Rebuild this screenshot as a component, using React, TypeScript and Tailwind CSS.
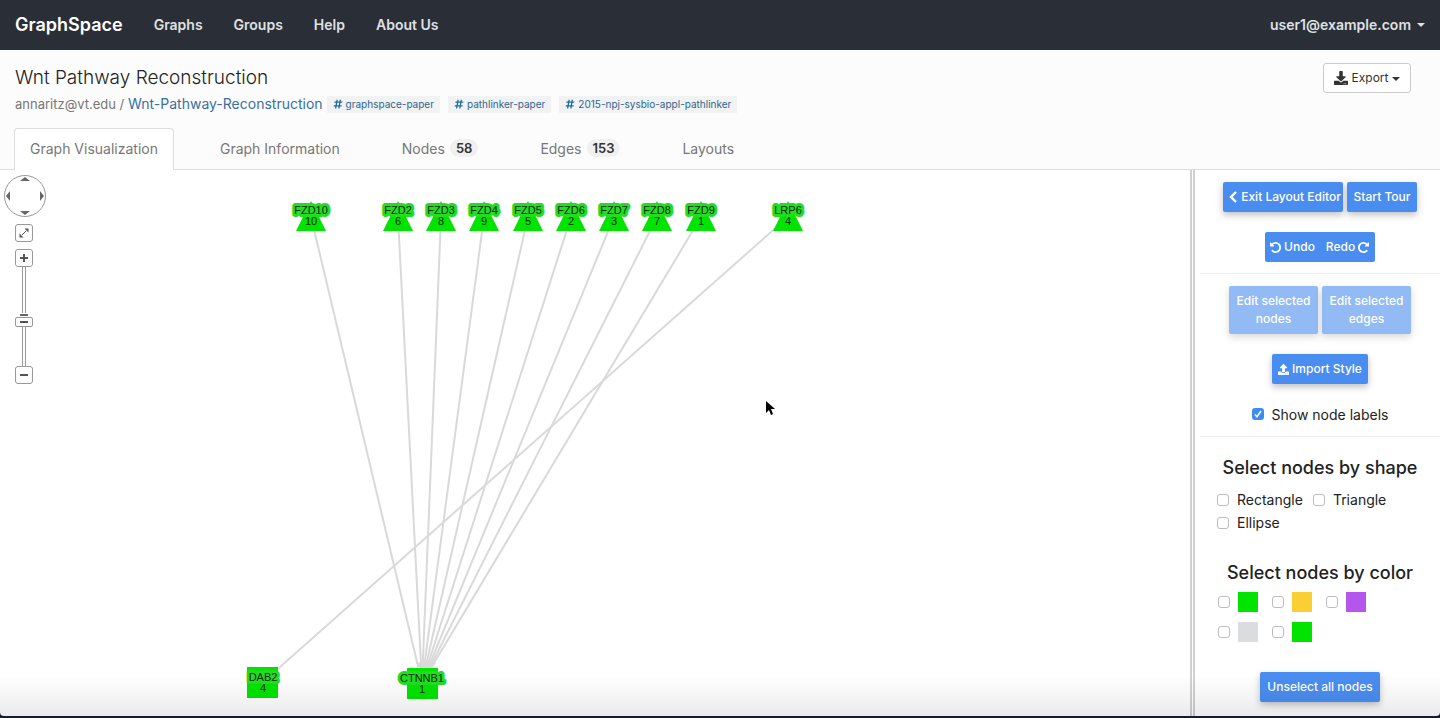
import type { ReactNode } from "react";
import { FaDownload, FaHashtag, FaUpload } from "react-icons/fa";

const receptors = [
  { x: 311, name: "FZD10", rank: "10" },
  { x: 398, name: "FZD2", rank: "6" },
  { x: 441, name: "FZD3", rank: "8" },
  { x: 484, name: "FZD4", rank: "9" },
  { x: 528, name: "FZD5", rank: "5" },
  { x: 571, name: "FZD6", rank: "2" },
  { x: 614, name: "FZD7", rank: "3" },
  { x: 657, name: "FZD8", rank: "7" },
  { x: 701, name: "FZD9", rank: "1" },
];

function Caret() {
  return <span className="mt-px inline-block border-x-4 border-t-4 border-x-transparent border-t-current" />;
}

function Rotate({ className = "" }: { className?: string }) {
  return (
    <svg viewBox="0 128 1536 1536" className={`h-[11px] w-[11px] ${className}`} fill="currentColor" aria-hidden="true">
      <path d="M1536 896q0 156-61 298t-164 245-245 164-298 61q-172 0-327-72.500T177 1387q-7-10-6.500-22.500t8.500-20.500l137-138q10-9 25-9 16 2 23 12 73 95 179 147t225 52q104 0 198.500-40.500t163.500-109.500 109.500-163.500T1280 896t-40.500-198.500T1130 534 966.500 424.500 768 384q-98 0-188 35.500T420 521l137 138q31 30 14 69-17 40-59 40H64q-26 0-45-19T0 704V256q0-42 40-59 39-17 69 14l130 129q107-101 244.500-156.500T768 128q156 0 298 61t245 164 164 245 61 298z" />
    </svg>
  );
}

function Label({ x, y, name, rank }: { x: number; y: number; name: string; rank: string }) {
  return (
    <g textAnchor="middle" fontSize="11" fill="#062806" stroke="#22dd22" strokeWidth="6" strokeLinejoin="round" paintOrder="stroke">
      <text x={x} y={y}>{name}</text>
      <text x={x} y={y + 11} stroke="none">{rank}</text>
    </g>
  );
}

function Receptor({ x, name, rank }: { x: number; name: string; rank: string }) {
  return (
    <g>
      <path d={`M${x} 31L${x + 15} 61H${x - 15}Z`} fill="#00e400" />
      <Label x={x} y={44} name={name} rank={rank} />
    </g>
  );
}

function Graph() {
  return (
    <svg className="absolute inset-0 h-full w-full font-['Liberation_Sans',Arial,sans-serif]" role="img" aria-label="Wnt pathway graph">
      <g stroke="#d9d9d9" strokeWidth="2">
        {receptors.map((r) => {
          const k = (497 - 47) / (513 - 47);
          return <line key={r.name} x1={r.x} y1={47} x2={r.x + (422 - r.x) * k} y2={497} />;
        })}
        <line x1="788" y1="47" x2="263" y2="512" />
      </g>
      <path d="M416 493l5-1h11l4 1-4 5h-12z" fill="#d9d9d9" />
      {receptors.map((r) => (
        <Receptor key={r.name} {...r} />
      ))}
      <Receptor x={788} name="LRP6" rank="4" />
      <rect x="247" y="497" width="31" height="31" fill="#00e400" />
      <Label x={263} y={511} name="DAB2" rank="4" />
      <rect x="407" y="498" width="31" height="31" fill="#00e400" />
      <Label x={422} y={512} name="CTNNB1" rank="1" />
      <path d="M766 231v12l3-3 2 5 2-1-2-5h4z" fill="#000" stroke="#fff" strokeWidth="1" paintOrder="stroke" />
    </svg>
  );
}

const zoomButton =
  "flex h-[18px] w-[18px] items-center justify-center rounded-[3px] border border-[#999] bg-white text-[#555]";

function PanZoom() {
  return (
    <div className="absolute left-1 top-[5px] flex w-[42px] flex-col items-center">
      <button aria-label="Pan" className="h-[42px] w-[42px] rounded-full border border-[#999] bg-white">
        <svg viewBox="0 0 40 40" className="h-10 w-10" fill="#666">
          <path d="M20 1l5 4h-10zM20 39l5-4h-10zM1 20l4-5v10zM39 20l-4-5v10z" />
        </svg>
      </button>
      <div className="flex flex-col items-center pr-[2px] pt-[7px]">
        <button aria-label="Fit" className={zoomButton}>
          <svg viewBox="0 0 12 12" className="h-3 w-3" fill="currentColor" stroke="currentColor">
            <path d="M4 8l4-4" />
            <path d="M6.500 1.500H10.500V5.500zM1.500 6.500V10.500H5.500z" stroke="none" />
          </svg>
        </button>
        <button aria-label="Zoom in" className={`${zoomButton} mt-[7px]`}>
          <svg viewBox="0 0 10 10" className="h-[10px] w-[10px]" stroke="currentColor" strokeWidth="2">
            <path d="M1 5h8M5 1v8" />
          </svg>
        </button>
        <div className="relative flex h-[99px] w-[18px] justify-center">
          <div className="w-1 border-x border-[#999] bg-white" />
          <div className="absolute inset-x-0 top-[47px] flex flex-col items-center">
            <div className="h-[2px] w-2 bg-[#666] outline outline-white" />
            <div className="mt-px flex h-[10px] w-[18px] items-center justify-center rounded-[2px] border border-[#999] bg-white">
              <div className="h-[2px] w-2 bg-[#555]" />
            </div>
          </div>
          <input type="range" aria-label="Zoom level" className="absolute inset-0 h-full w-full opacity-0 [writing-mode:vertical-lr]" />
        </div>
        <button aria-label="Zoom out" className={zoomButton}>
          <svg viewBox="0 0 10 10" className="h-[10px] w-[10px]" stroke="currentColor" strokeWidth="2">
            <path d="M1 5h8" />
          </svg>
        </button>
      </div>
    </div>
  );
}

function Tag({ children }: { children: ReactNode }) {
  return (
    <a href="#tag" className="flex h-[17px] items-center gap-[3px] bg-[#f1f2f2] px-[6px] text-[10px] text-[#2f6690]">
      <FaHashtag className="h-[10px] w-[10px] text-[#1b6a9c]" />
      {children}
    </a>
  );
}

function Badge({ children }: { children: ReactNode }) {
  return <span className="rounded-full bg-[#f0f0f0] px-[6px] text-[13px] leading-[18px] font-semibold text-[#333]">{children}</span>;
}

function Tab({ children }: { children: ReactNode }) {
  return (
    <button role="tab" className="flex items-center gap-[5px] px-4 pb-[2px]">
      {children}
    </button>
  );
}

const blue = "flex items-center justify-center bg-[#4a8df0] text-[12px] leading-[18px] font-medium text-white";
const raised = "rounded-[2px] shadow-[0_3px_7px_rgba(0,0,0,0.25)]";
const box =
  "h-3 w-3 shrink-0 appearance-none rounded-[3px] border border-[#bdbdbd] bg-white";

function Shape({ id, children }: { id: string; children: string }) {
  return (
    <div className="flex items-center gap-2">
      <input id={id} type="checkbox" className={box} />
      <label htmlFor={id}>{children}</label>
    </div>
  );
}

function Swatch({ name, color }: { name: string; color: string }) {
  return (
    <label className="flex items-center gap-2">
      <input type="checkbox" aria-label={name} className={box} />
      <span className={`h-5 w-5 ${color}`} />
    </label>
  );
}

function Sidebar() {
  return (
    <aside className="w-[250px] shrink-0 border-l-[5px] border-double border-[#d0d0d0] pl-[5px] text-[14px] text-[#222]">
      <div className="flex flex-col items-center border-b border-[#eee] pb-[11px] pt-3">
        <div className="flex gap-1">
          <button className={`${blue} ${raised} h-[30px] w-[120px] gap-1 pl-1`}>
            <svg viewBox="0 0 8 12" className="h-3 w-2" fill="none" stroke="currentColor" strokeWidth="2.400" aria-hidden="true">
              <path d="M7 1L2 6l5 5" />
            </svg>
            <span className="whitespace-nowrap">Exit Layout Editor</span>
          </button>
          <button className={`${blue} ${raised} h-[30px] w-[70px]`}>Start Tour</button>
        </div>
        <div className="mt-5 flex overflow-hidden rounded-[2px]">
          <button className={`${blue} h-[30px] w-[55px] gap-[3px]`}>
            <Rotate />
            Undo
          </button>
          <button className={`${blue} h-[30px] w-[55px] gap-[3px]`}>
            Redo
            <Rotate className="-scale-x-100" />
          </button>
        </div>
      </div>
      <div className="flex flex-col items-center border-b border-[#eee] pb-3 pt-3">
        <div className="flex gap-1">
          <button disabled className={`${blue} ${raised} h-12 w-[89px] px-1 opacity-60`}>Edit selected nodes</button>
          <button disabled className={`${blue} ${raised} h-12 w-[89px] px-1 opacity-60`}>Edit selected edges</button>
        </div>
        <button className={`${blue} ${raised} mt-5 h-[30px] w-24 gap-[3px]`}>
          <FaUpload className="h-[11px] w-[11px]" />
          Import Style
        </button>
        <div className="mt-5 flex h-5 items-center gap-2">
          <span className="relative flex">
            <input id="labels" type="checkbox" defaultChecked className="h-3 w-3 appearance-none rounded-[3px] bg-[#3f8cf0]" />
            <svg viewBox="0 0 12 12" className="pointer-events-none absolute inset-0 h-3 w-3" fill="none" stroke="#fff" strokeWidth="1.500">
              <path d="M3 6.500l2 2.300L9 3" />
            </svg>
          </span>
          <label htmlFor="labels">Show node labels</label>
        </div>
      </div>
      <h2 className="pt-[19px] text-center text-[18px] leading-6 font-medium">Select nodes by shape</h2>
      <div className="flex flex-wrap gap-x-[10px] pl-[17px] pt-2 leading-[23px]">
        <Shape id="rectangle">Rectangle</Shape>
        <Shape id="triangle">Triangle</Shape>
        <Shape id="ellipse">Ellipse</Shape>
      </div>
      <h2 className="pt-[27px] text-center text-[18px] leading-6 font-medium">Select nodes by color</h2>
      <div className="grid w-fit grid-cols-3 gap-x-[14px] gap-y-[10px] pl-[18px] pt-[7px]">
        <Swatch name="Green" color="bg-[#00e400]" />
        <Swatch name="Yellow" color="bg-[#f9cf33]" />
        <Swatch name="Purple" color="bg-[#b455ee]" />
        <Swatch name="Gray" color="bg-[#dadcdd]" />
        <Swatch name="Lime" color="bg-[#00e400]" />
      </div>
      <div className="flex justify-center pb-[14px] pt-[30px]">
        <button className={`${blue} ${raised} h-[30px] w-[120px]`}>Unselect all nodes</button>
      </div>
    </aside>
  );
}

export default function App() {
  return (
    <div className="flex min-h-screen flex-col bg-[#141e2e] pb-[2px] font-['Inter',sans-serif]">
      <header className="flex h-[50px] items-center justify-between bg-[#2a2e37] px-[15px] pb-[2px] text-[14px] font-semibold text-[#dfe1e4]">
        <nav className="flex items-center gap-[31px]">
          <a href="#home" className="text-[18px] text-white">GraphSpace</a>
          <a href="#graphs">Graphs</a>
          <a href="#groups">Groups</a>
          <a href="#help">Help</a>
          <a href="#about">About Us</a>
        </nav>
        <button className="flex items-center gap-[6px]">
          user1@example.com
          <Caret />
        </button>
      </header>
      <div className="border-b border-[#ddd] bg-[#fcfcfc]">
        <div className="flex justify-between pl-[15px] pr-[29px] pt-[13px]">
          <div>
            <h1 className="pt-px text-[19px] leading-7 font-light text-[#222]">Wnt Pathway Reconstruction</h1>
            <div className="flex items-center gap-2 text-[13px] leading-6 text-[#777]">
              <p className="-mr-1">
                annaritz@vt.edu / <a href="#graph" className="text-[14px] text-[#3a6f9f]">Wnt-Pathway-Reconstruction</a>
              </p>
              <Tag>graphspace-paper</Tag>
              <Tag>pathlinker-paper</Tag>
              <Tag>2015-npj-sysbio-appl-pathlinker</Tag>
            </div>
          </div>
          <button className="flex h-[30px] w-[88px] items-center justify-center gap-1 rounded-[3px] border border-[#ccc] bg-white text-[12px] text-[#333]">
            <FaDownload className="h-[14px] w-[14px]" />
            Export
            <Caret />
          </button>
        </div>
        <div role="tablist" className="-mb-px mt-3 flex h-[42px] gap-[30px] pl-[14px] text-[14px] text-[#777]">
          <button role="tab" aria-selected="true" className="rounded-t-[4px] border border-b-0 border-[#ddd] bg-white px-[15px] pb-[3px]">
            Graph Visualization
          </button>
          <Tab>Graph Information</Tab>
          <Tab>Nodes <Badge>58</Badge></Tab>
          <Tab>Edges <Badge>153</Badge></Tab>
          <Tab>Layouts</Tab>
        </div>
      </div>
      <main className="relative flex flex-1 rounded-b-[4px] bg-white">
        <section className="relative flex-1">
          <Graph />
          <PanZoom />
        </section>
        <Sidebar />
        <div className="pointer-events-none absolute inset-x-0 bottom-0 h-10 rounded-b-[4px] bg-linear-to-b from-transparent to-black/8" />
      </main>
    </div>
  );
}
